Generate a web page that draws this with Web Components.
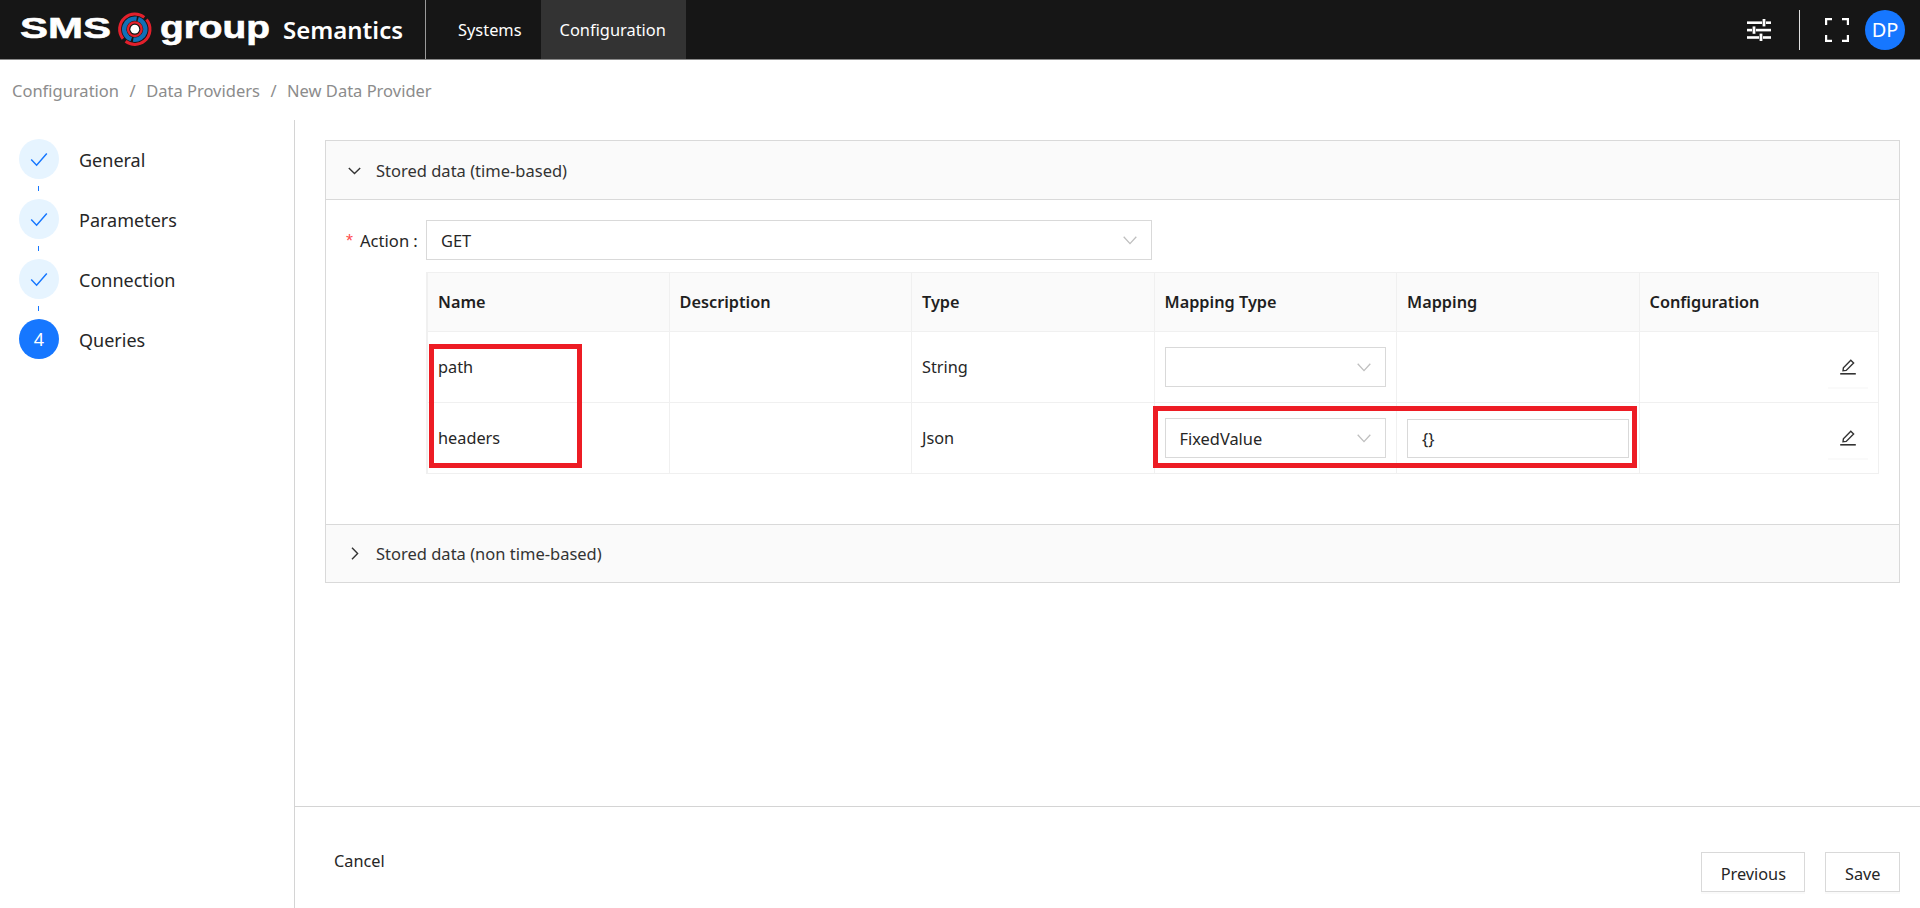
<!DOCTYPE html>
<html>
<head>
<meta charset="utf-8">
<title>New Data Provider</title>
<style>
  html, body { margin: 0; height: 100%; }
  body { font: 16.4px "Noto Sans", "Liberation Sans", sans-serif; color: #262626; background: #fff; overflow: hidden; }
</style>
</head>
<body>
<app-shell>
  <top-bar slot="top">
    <nav-tab>Systems</nav-tab>
    <nav-tab active>Configuration</nav-tab>
  </top-bar>
  <bread-crumbs slot="crumbs">
    <span>Configuration</span><span>Data Providers</span><span>New Data Provider</span>
  </bread-crumbs>
  <step-list slot="side">
    <step-item done>General</step-item>
    <step-item done>Parameters</step-item>
    <step-item done>Connection</step-item>
    <step-item number="4" last>Queries</step-item>
  </step-list>

  <collapse-panel heading="Stored data (time-based)" open>
    <form-row label="Action"><select-box value="GET"></select-box></form-row>
    <param-table>
      <param-row head>
        <span slot="a">Name</span><span slot="b">Description</span><span slot="c">Type</span>
        <span slot="d">Mapping Type</span><span slot="e">Mapping</span><span slot="f">Configuration</span>
      </param-row>
      <param-row>
        <span slot="a">path</span><span slot="c">String</span>
        <select-box slot="d"></select-box>
        <edit-button slot="f"></edit-button>
      </param-row>
      <param-row>
        <span slot="a">headers</span><span slot="c">Json</span>
        <select-box slot="d" value="FixedValue"></select-box>
        <text-field slot="e" value="{}"></text-field>
        <edit-button slot="f"></edit-button>
      </param-row>
      <mark-box style="left:2px;top:71px;width:153px;height:124px"></mark-box>
      <mark-box style="left:726px;top:133px;width:484px;height:62px"></mark-box>
    </param-table>
  </collapse-panel>
  <collapse-panel heading="Stored data (non time-based)"></collapse-panel>

  <foot-bar slot="foot">
    <plain-button slot="left">Cancel</plain-button>
    <plain-button slot="right" outline>Previous</plain-button>
    <plain-button slot="right" outline>Save</plain-button>
  </foot-bar>
</app-shell>

<script>
class AppShell extends HTMLElement {
  constructor() {
    super();
    this.attachShadow({ mode: "open" }).innerHTML = `
      <style>
        :host { display: flex; flex-direction: column; height: 100vh; }
        #main { flex: 1; display: flex; min-height: 0; }
        #side { width: 294px; border-right: 1px solid #d4d4d4; flex: none; }
        #col { flex: 1; display: flex; flex-direction: column; min-width: 0; }
        #content { flex: 1; padding: 20px 20px 0 30px; }
      </style>
      <slot name="top"></slot>
      <slot name="crumbs"></slot>
      <div id="main">
        <div id="side"><slot name="side"></slot></div>
        <div id="col">
          <div id="content"><slot></slot></div>
          <slot name="foot"></slot>
        </div>
      </div>`;
  }
}

class TopBar extends HTMLElement {
  constructor() {
    super();
    this.attachShadow({ mode: "open" }).innerHTML = `
      <style>
        :host { display: flex; height: 60px; box-sizing: border-box; background: #161616; border-bottom: 1px solid #8a8a8a; color: #fff; align-items: stretch; flex: none; }
        #logo { width: 425px; flex: none; display: block; height: 59px; border-right: 1px solid #9a9a9a; box-sizing: content-box; }
        #tabs { display: flex; margin-left: 13px; }
        #tools { margin-left: auto; display: flex; align-items: center; }
        #sep { width: 1px; height: 40px; background: #e0e0e0; margin: 0 25px 0 28px; }
        #avatar { width: 40px; height: 40px; border-radius: 50%; background: #1677ff; color: #fff; font-size: 20px; display: flex; align-items: center; justify-content: center; margin: 0 15px 0 16px; }
        svg.tool { display: block; }
      </style>
      <svg id="logo" viewBox="0 0 425 59" width="425" height="59">
        <text x="20" y="38" textLength="91" lengthAdjust="spacingAndGlyphs" font-family="Liberation Sans" font-weight="700" font-size="29.5" fill="#fff" stroke="#fff" stroke-width=".6">SMS</text>
        <g fill="none" transform="translate(134.8 29.2)">
          <circle r="15.2" stroke="#e2202c" stroke-width="3" stroke-dasharray="44 3.8" transform="rotate(-40)"/>
          <circle r="10.6" stroke="#1170b8" stroke-width="4.4" stroke-dasharray="31.3 2" transform="rotate(-72)"/>
          <circle r="6.8" stroke="#e2202c" stroke-width="2.4"/>
          <circle r="4.4" fill="#fff"/>
        </g>
        <text x="160" y="38" textLength="110" lengthAdjust="spacingAndGlyphs" font-family="Liberation Sans" font-weight="700" font-size="31" fill="#fff" stroke="#fff" stroke-width=".6">group</text>
        <text x="283" y="39" textLength="120" lengthAdjust="spacingAndGlyphs" font-family="Noto Sans" font-weight="600" font-size="23" fill="#fff">Semantics</text>
      </svg>
      <div id="tabs"><slot></slot></div>
      <div id="tools">
        <svg class="tool" width="24" height="22" viewBox="0 0 24 22" fill="#fff">
          <rect x="0" y="2.4" width="15" height="2.6"/><rect x="19" y="2.4" width="5" height="2.6"/><rect x="15.6" y="0" width="2.8" height="7.4"/>
          <rect x="0" y="9.8" width="5" height="2.6"/><rect x="9" y="9.8" width="15" height="2.6"/><rect x="5.6" y="7.4" width="2.8" height="7.4"/>
          <rect x="0" y="17.2" width="12" height="2.6"/><rect x="16" y="17.2" width="8" height="2.6"/><rect x="12.6" y="14.6" width="2.8" height="7.4"/>
        </svg>
        <div id="sep"></div>
        <svg class="tool" width="24" height="24" viewBox="0 0 24 24" fill="none" stroke="#fff" stroke-width="2.2">
          <path d="M1.1 7V1.1H7M17 1.1h5.9V7M22.9 17v5.9H17M7 22.9H1.1V17"/>
        </svg>
        <div id="avatar">DP</div>
      </div>`;
  }
}

class NavTab extends HTMLElement {
  constructor() {
    super();
    this.attachShadow({ mode: "open" }).innerHTML = `
      <style>
        :host { display: flex; align-items: center; padding: 0 19px; font-size: 16.4px; color: #fff; }
        :host([active]) { background: #333; padding: 0 20px 0 19px; }
      </style>
      <slot></slot>`;
  }
}

class BreadCrumbs extends HTMLElement {
  constructor() {
    super();
    this.attachShadow({ mode: "open" }).innerHTML = `
      <style>
        :host { display: flex; align-items: center; height: 60px; flex: none; padding-left: 12px; color: #8c8c8c; font-size: 16.5px; }
        ::slotted(span:not(:last-child))::after { content: "/"; margin: 0 10.5px; }
      </style>
      <slot></slot>`;
  }
}

class StepList extends HTMLElement {
  constructor() {
    super();
    this.attachShadow({ mode: "open" }).innerHTML = `
      <style>:host { display: flex; flex-direction: column; gap: 20px; padding: 19px 0 0 19px; }</style>
      <slot></slot>`;
  }
}

class StepItem extends HTMLElement {
  constructor() {
    super();
    var inner = this.hasAttribute("done")
      ? `<svg width="18" height="15" viewBox="0 0 18 15" fill="none" stroke="#1677ff" stroke-width="1.5"><path d="M1.2 7.6l5.4 5.6L16.8 1.6"/></svg>`
      : this.getAttribute("number");
    this.attachShadow({ mode: "open" }).innerHTML = `
      <style>
        :host { display: flex; align-items: center; height: 40px; font-size: 18px; color: #262626; position: relative; }
        #dot { width: 40px; height: 40px; border-radius: 50%; background: #e6f4ff; display: flex; align-items: center; justify-content: center; margin-right: 20px; color: #fff; font-size: 18px; }
        :host(:not([done])) #dot { background: #1677ff; }
        #text { padding-top: 1px; }
        #tail { position: absolute; left: 19px; top: 47px; width: 1px; height: 5px; background: #1677ff; }
        :host([last]) #tail { display: none; }
      </style>
      <div id="dot">${inner}</div><div id="text"><slot></slot></div><div id="tail"></div>`;
  }
}

class CollapsePanel extends HTMLElement {
  constructor() {
    super();
    this.attachShadow({ mode: "open" }).innerHTML = `
      <style>
        :host { display: block; border: 1px solid #d9d9d9; border-bottom-width: 0; }
        :host(:last-of-type) { border-bottom-width: 1px; }
        #head { height: 57px; background: #fafafa; display: flex; align-items: center; padding-left: 22px; font-size: 16.5px; color: #333; }
        :host([open]) #head { height: 58px; }
        #head svg { margin-right: 15px; flex: none; }
        #body { display: none; border-top: 1px solid #d9d9d9; padding: 20px 20px 0 20px; height: 325px; box-sizing: border-box; }
        :host([open]) #body { display: block; }
        :host([open]) #head svg { transform: rotate(90deg); }
      </style>
      <div id="head">
        <svg width="13" height="13" viewBox="0 0 13 13" fill="none" stroke="#333" stroke-width="1.4"><path d="M4 .8l5.6 5.7L4 12.2"/></svg>
        <span>${this.getAttribute("heading")}</span>
      </div>
      <div id="body"><slot></slot></div>`;
  }
}

class FormRow extends HTMLElement {
  constructor() {
    super();
    this.attachShadow({ mode: "open" }).innerHTML = `
      <style>
        :host { display: flex; align-items: center; height: 40px; margin-bottom: 12px; }
        #label { width: 80px; flex: none; font-size: 16.6px; color: #262626; white-space: nowrap; }
        #label i { color: #ff4d4f; font-style: normal; margin-right: 7px; font-size: 18px; font-family: "Liberation Sans", sans-serif; }
        #label b { font-weight: 400; margin-left: 4px; }
        #box { flex: 1; max-width: 726px; }
      </style>
      <div id="label"><i>*</i>${this.getAttribute("label")}<b>:</b></div>
      <div id="box"><slot></slot></div>`;
  }
}

class SelectBox extends HTMLElement {
  constructor() {
    super();
    this.attachShadow({ mode: "open" }).innerHTML = `
      <style>
        :host { display: flex; align-items: center; height: 40px; box-sizing: border-box; border: 1px solid #d9d9d9; padding: 0 14px; font-size: 16.4px; color: #262626; background: #fff; }
        span { flex: 1; }
        svg { flex: none; }
      </style>
      <span>${this.getAttribute("value") || ""}</span>
      <svg width="14" height="9" viewBox="0 0 14 9" fill="none" stroke="#bfbfbf" stroke-width="1.3"><path d="M.7.8L7 7.6 13.3.8"/></svg>`;
  }
}

class TextField extends HTMLElement {
  constructor() {
    super();
    this.attachShadow({ mode: "open" }).innerHTML = `
      <style>
        :host { display: flex; align-items: center; height: 39px; box-sizing: border-box; border: 1px solid #d9d9d9; padding: 0 14px; font-size: 16.4px; color: #262626; background: #fff; }
      </style>
      <span>${this.getAttribute("value") || ""}</span>`;
  }
}

class ParamTable extends HTMLElement {
  constructor() {
    super();
    this.attachShadow({ mode: "open" }).innerHTML = `
      <style>
        :host { display: block; position: relative; margin-left: 80px; width: 1453px; box-sizing: border-box; border: 1px solid #f0f0f0; border-bottom: 0; }
      </style>
      <slot></slot>`;
  }
}

class ParamRow extends HTMLElement {
  constructor() {
    super();
    this.attachShadow({ mode: "open" }).innerHTML = `
      <style>
        :host { display: grid; grid-template-columns: 241.5px repeat(4, 242.5px) 1fr; height: 71px; box-sizing: border-box; border-bottom: 1px solid #f0f0f0; font-size: 16.3px; color: #262626; }
        :host([head]) { height: 59px; background: #fafafa; font-weight: 600; color: #1f1f1f; }
        div { display: flex; align-items: center; padding: 0 10px; border-left: 1px solid #f0f0f0; min-width: 0; }
        div:first-child { border-left: 0; padding-left: 9px; }
        ::slotted(select-box), ::slotted(text-field) { flex: 1; min-width: 0; }
        #f { justify-content: flex-end; }
        :host([head]) #f { justify-content: flex-start; }
      </style>
      <div><slot name="a"></slot></div>
      <div><slot name="b"></slot></div>
      <div><slot name="c"></slot></div>
      <div><slot name="d"></slot></div>
      <div><slot name="e"></slot></div>
      <div id="f"><slot name="f"></slot></div>`;
  }
}

class EditButton extends HTMLElement {
  constructor() {
    super();
    this.attachShadow({ mode: "open" }).innerHTML = `
      <style>
        :host { display: flex; align-items: center; justify-content: center; width: 40px; height: 40px; box-shadow: 0 2px 0 rgba(0,0,0,.02); }
      </style>
      <svg width="16" height="16" viewBox="0 0 16 16" fill="none" stroke="#333" stroke-width="1.4">
        <path d="M3 11.8l.4-3L10.8 1.3 13.6 4 6.2 11.4z"/><path d="M.2 14.8h15.6" stroke-width="1.6"/>
      </svg>`;
  }
}

class MarkBox extends HTMLElement {
  constructor() {
    super();
    this.attachShadow({ mode: "open" }).innerHTML = `
      <style>:host { position: absolute; box-sizing: border-box; border: 5px solid #ed1c24; pointer-events: none; }</style>`;
  }
}

class FootBar extends HTMLElement {
  constructor() {
    super();
    this.attachShadow({ mode: "open" }).innerHTML = `
      <style>
        :host { display: flex; height: 102px; box-sizing: border-box; border-top: 1px solid #d4d4d4; padding: 34px 20px 0 18px; flex: none; }
        #right { margin-left: auto; margin-top: 11px; display: flex; gap: 20px; height: 40px; }
      </style>
      <div><slot name="left"></slot></div>
      <div id="right"><slot name="right"></slot></div>`;
  }
}

class PlainButton extends HTMLElement {
  constructor() {
    super();
    this.attachShadow({ mode: "open" }).innerHTML = `
      <style>
        :host { display: flex; align-items: center; height: 40px; box-sizing: border-box; padding: 0 20px; border: 1px solid transparent; font-size: 16.3px; color: #262626; }
        :host([outline]) { padding: 3px 18.5px 0; border-color: #d9d9d9; box-shadow: 0 2px 0 rgba(0,0,0,.02); }
      </style>
      <slot></slot>`;
  }
}

customElements.define("app-shell", AppShell);
customElements.define("top-bar", TopBar);
customElements.define("nav-tab", NavTab);
customElements.define("bread-crumbs", BreadCrumbs);
customElements.define("step-list", StepList);
customElements.define("step-item", StepItem);
customElements.define("collapse-panel", CollapsePanel);
customElements.define("form-row", FormRow);
customElements.define("select-box", SelectBox);
customElements.define("text-field", TextField);
customElements.define("param-table", ParamTable);
customElements.define("param-row", ParamRow);
customElements.define("edit-button", EditButton);
customElements.define("mark-box", MarkBox);
customElements.define("foot-bar", FootBar);
customElements.define("plain-button", PlainButton);
</script>
</body>
</html>
